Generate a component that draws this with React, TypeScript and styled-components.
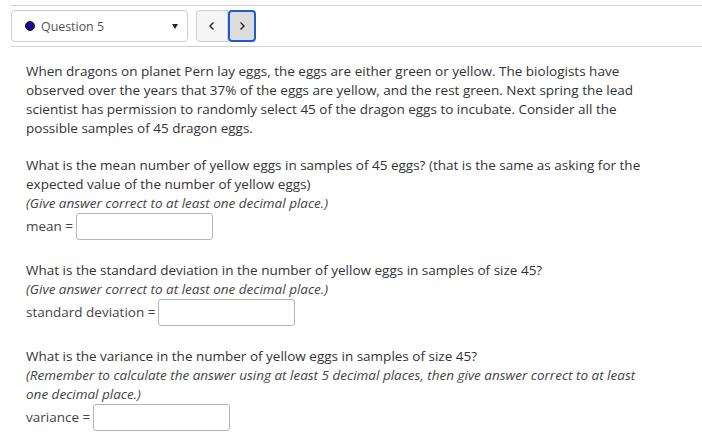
import React from "react";
import styled, { createGlobalStyle } from "styled-components";

const Global = createGlobalStyle`
  html, body { margin: 0; padding: 0; background: #fff; }
  body { font-family: "Open Sans", "Noto Sans", sans-serif; color: #333; }
`;

const Page = styled.div`
  width: 702px;
  height: 440px;
  overflow: hidden;
  padding-top: 5px;
  box-sizing: border-box;
`;

const Toolbar = styled.div`
  margin-left: 11px;
  border-top: 1px solid #d2d2d2;
  border-bottom: 1px solid #d2d2d2;
  padding: 4px 0 4px 0;
  display: flex;
  align-items: center;
`;

const Select = styled.div`
  width: 177px;
  height: 32px;
  box-sizing: border-box;
  border: 1px solid #ccc;
  border-radius: 4px;
  display: flex;
  align-items: center;
  padding: 0 9px 0 13px;
  font-size: 12.4px;
  color: #555;
`;

const Dot = styled.span`
  width: 10px;
  height: 10px;
  border-radius: 50%;
  background: #1c0a8e;
  border: 1px solid #111;
  box-sizing: border-box;
  margin-right: 6px;
`;

const Label = styled.span`
  flex: 1;
`;

const Caret = styled.span`
  width: 0;
  height: 0;
  border-left: 3.5px solid transparent;
  border-right: 3.5px solid transparent;
  border-top: 5px solid #222;
`;

const NavGroup = styled.div`
  display: flex;
  margin-left: 8px;
`;

const NavButton = styled.button<{ $active?: boolean; $first?: boolean }>`
  height: 32px;
  width: ${(p) => (p.$first ? 32 : 28)}px;
  box-sizing: border-box;
  padding: 0;
  display: flex;
  align-items: center;
  justify-content: center;
  background: ${(p) => (p.$active ? "#dcdcdc" : "#f5f5f5")};
  border: ${(p) => (p.$active ? "2px solid #1a5dcc" : "1px solid #cfcfcf")};
  border-radius: ${(p) => (p.$first ? "4px 0 0 4px" : "4px")};
  color: #222;
`;

const Content = styled.div`
  width: 624px;
  padding: 15px 0 0 26px;
  font-size: 13.5px;
  line-height: 19px;
`;

const Para = styled.p`
  margin: 0 0 18px 0;
`;

const Hint = styled.div`
  font-style: italic;
  color: #444;
`;

const Block = styled.div`
  margin-bottom: 21px;
`;

const AnswerRow = styled.div`
  display: flex;
  align-items: center;
  color: #444;
`;

const Input = styled.input`
  width: 137px;
  height: 27px;
  box-sizing: border-box;
  border: 1px solid #b5b5b5;
  border-radius: 3px;
  margin-left: 3px;
  font-family: inherit;
`;

const Chevron = ({ dir }: { dir: "left" | "right" }) => (
  <svg width="8" height="10" viewBox="0 0 8 10">
    <path
      d={dir === "left" ? "M5.5 1.5 L2 5 L5.5 8.5" : "M2.5 1.5 L6 5 L2.5 8.5"}
      fill="none"
      stroke="#222"
      strokeWidth="1.4"
    />
  </svg>
);

export default function App() {
  return (
    <Page>
      <Global />
      <Toolbar>
        <Select>
          <Dot />
          <Label>Question 5</Label>
          <Caret />
        </Select>
        <NavGroup>
          <NavButton $first>
            <Chevron dir="left" />
          </NavButton>
          <NavButton $active>
            <Chevron dir="right" />
          </NavButton>
        </NavGroup>
      </Toolbar>
      <Content>
        <Para>
          When dragons on planet Pern lay eggs, the eggs are either green or yellow. The biologists have
          observed over the years that 37% of the eggs are yellow, and the rest green. Next spring the lead
          scientist has permission to randomly select 45 of the dragon eggs to incubate. Consider all the
          possible samples of 45 dragon eggs.
        </Para>
        <Block>
          <div>
            What is the mean number of yellow eggs in samples of 45 eggs? (that is the same as asking for the
            expected value of the number of yellow eggs)
          </div>
          <Hint>(Give answer correct to at least one decimal place.)</Hint>
          <AnswerRow>
            mean = <Input />
          </AnswerRow>
        </Block>
        <Block>
          <div>What is the standard deviation in the number of yellow eggs in samples of size 45?</div>
          <Hint>(Give answer correct to at least one decimal place.)</Hint>
          <AnswerRow>
            standard deviation = <Input />
          </AnswerRow>
        </Block>
        <Block>
          <div>What is the variance in the number of yellow eggs in samples of size 45?</div>
          <Hint>
            (Remember to calculate the answer using at least 5 decimal places, then give answer correct to at least
            one decimal place.)
          </Hint>
          <AnswerRow>
            variance = <Input />
          </AnswerRow>
        </Block>
      </Content>
    </Page>
  );
}
